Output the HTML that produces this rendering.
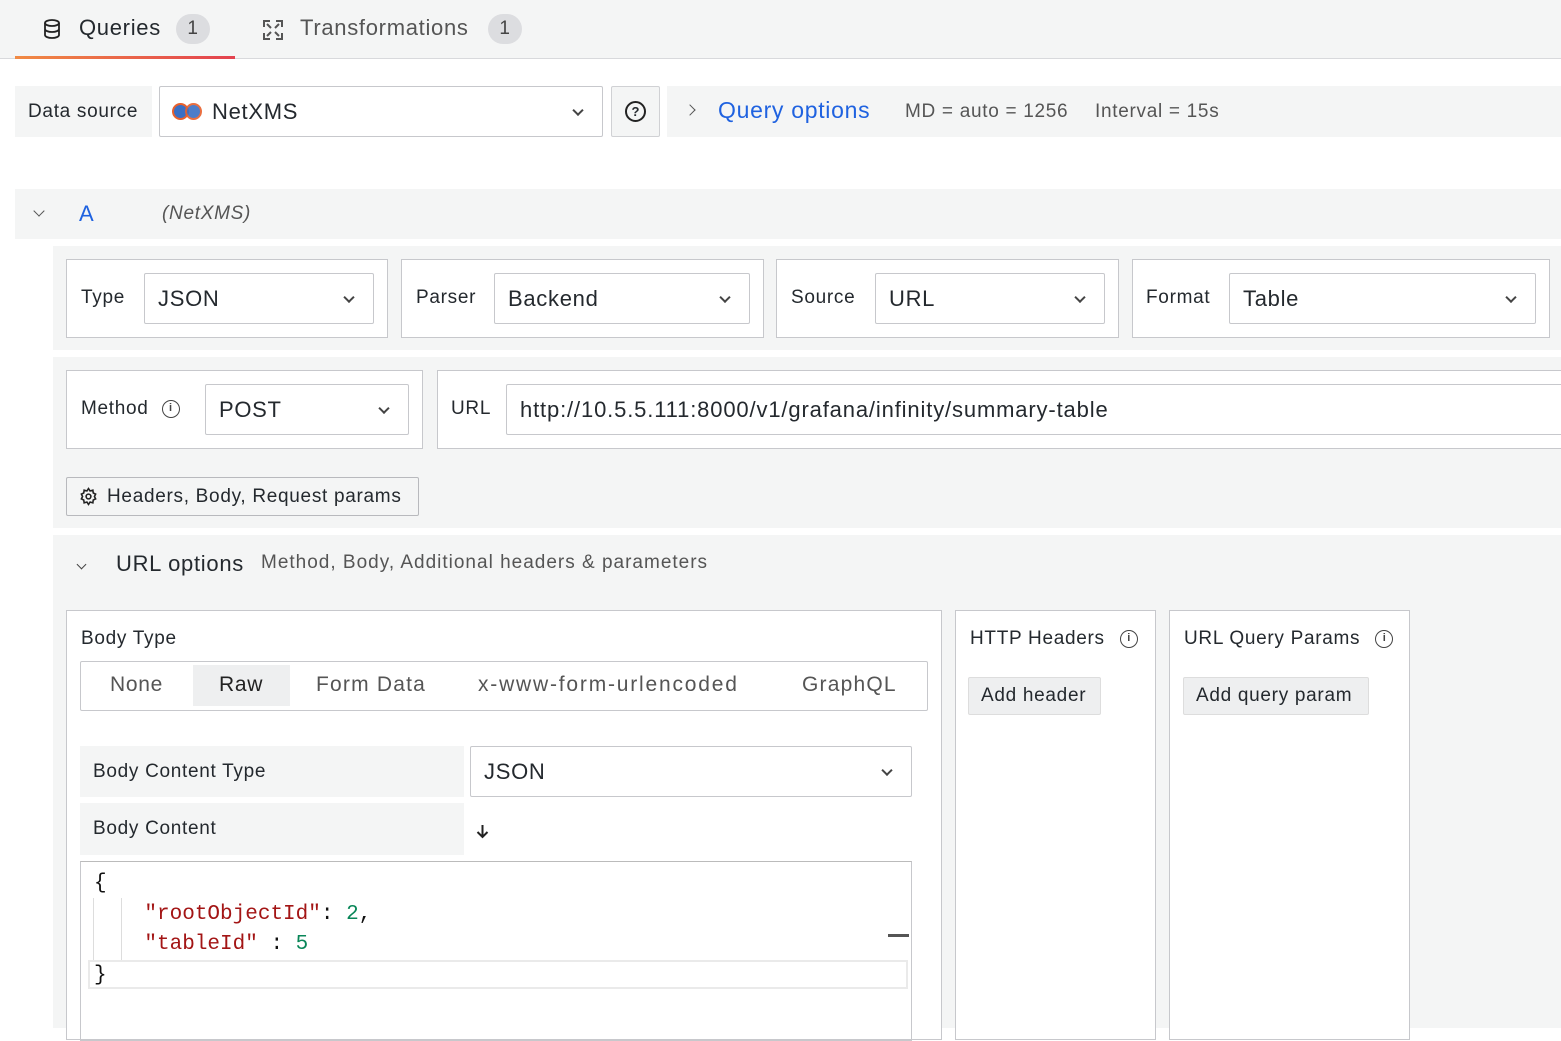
<!DOCTYPE html>
<html><head><meta charset="utf-8"><style>
*{box-sizing:border-box;margin:0;padding:0}
body{width:1561px;height:1028px;overflow:hidden;background:#fff;font-family:"Liberation Sans",sans-serif;color:#24292e;position:relative;letter-spacing:.7px}
.a{position:absolute;white-space:nowrap}
.g{background:#f4f5f5}
.bx{position:absolute;background:#fff;border:1px solid #c7c8cc}
.sel{position:absolute;background:#fff;border:1px solid #c7c8cc;border-radius:2px;font-size:22px;display:flex;align-items:center;padding-left:13px;color:#24292e;white-space:nowrap;overflow:hidden}
.chev{position:absolute;right:20px;top:50%;width:8px;height:8px;border-right:2px solid #444;border-bottom:2px solid #444;transform:translateY(-70%) rotate(45deg)}
.lbl{position:absolute;font-size:19px;color:#24292e;white-space:nowrap}
.info{display:inline-block;width:18px;height:18px;border:1.6px solid #444;border-radius:50%;font-size:11px;text-align:center;line-height:15px;font-weight:bold;color:#444;vertical-align:middle;letter-spacing:0}
</style></head><body>
<div class="a g" style="left:0;top:0;width:1561px;height:59px;border-bottom:1px solid #d8d9dc"></div>
<div class="a" style="left:15px;top:56px;width:220px;height:3px;background:linear-gradient(90deg,#f08a44,#e3424f)"></div>
<svg class="a" style="left:43px;top:19px" width="18" height="20" viewBox="0 0 18 20" fill="none" stroke="#222" stroke-width="1.8"><ellipse cx="9" cy="4" rx="7" ry="3"/><path d="M2 4v12c0 1.7 3.1 3 7 3s7-1.3 7-3V4M2 10c0 1.7 3.1 3 7 3s7-1.3 7-3"/></svg>
<div class="a" style="left:79px;top:15px;font-size:22px;color:#24292e">Queries</div>
<div class="a" style="left:176px;top:14px;width:34px;height:30px;border-radius:15px;background:#dcdde0;font-size:19px;text-align:center;line-height:30px;color:#444">1</div>
<svg class="a" style="left:262px;top:19px" width="22" height="22" viewBox="0 0 22 22" fill="none" stroke="#555" stroke-width="2"><path d="M2 8V2h6M14 2h6v6M20 14v6h-6M8 20H2v-6M5 5l4 4M17 5l-4 4M17 17l-4-4M5 17l4-4"/></svg>
<div class="a" style="left:300px;top:15px;font-size:22px;color:#555">Transformations</div>
<div class="a" style="left:488px;top:14px;width:34px;height:30px;border-radius:15px;background:#dcdde0;font-size:19px;text-align:center;line-height:30px;color:#444">1</div>
<div class="a g" style="left:15px;top:86px;width:137px;height:51px;font-size:19px;line-height:51px;padding-left:13px">Data source</div>
<div class="sel" style="left:159px;top:86px;width:444px;height:51px;padding-left:52px">NetXMS<span class="chev"></span></div>
<div class="a" style="left:172px;top:103px;width:17px;height:17px;border-radius:50%;background:#3a6fc4;border:2.5px solid #e8602c"></div>
<div class="a" style="left:185px;top:103px;width:17px;height:17px;border-radius:50%;background:#3a6fc4;border:2.5px solid #e8602c;opacity:.9"></div>
<div class="a g" style="left:611px;top:86px;width:49px;height:51px;border:1px solid #d0d1d4;border-radius:2px"></div>
<div class="a" style="left:625px;top:101px;width:21px;height:21px;border:2px solid #222;border-radius:50%;font-size:13px;font-weight:bold;text-align:center;line-height:17px;letter-spacing:0">?</div>
<div class="a g" style="left:667px;top:86px;width:894px;height:51px"></div>
<div class="a" style="left:686px;top:106px;width:8px;height:8px;border-right:1.8px solid #555;border-bottom:1.8px solid #555;transform:rotate(-45deg)"></div>
<div class="a" style="left:718px;top:97px;font-size:23px;color:#1f62e0">Query options</div>
<div class="a" style="left:905px;top:101px;font-size:19px;color:#555">MD = auto = 1256</div>
<div class="a" style="left:1095px;top:101px;font-size:19px;color:#555">Interval = 15s</div>
<div class="a g" style="left:15px;top:189px;width:1546px;height:50px"></div>
<div class="a" style="left:35px;top:207px;width:8px;height:8px;border-right:1.8px solid #555;border-bottom:1.8px solid #555;transform:rotate(45deg)"></div>
<div class="a" style="left:79px;top:201px;font-size:22px;color:#1f62e0">A</div>
<div class="a" style="left:162px;top:203px;font-size:19px;color:#555;font-style:italic">(NetXMS)</div>
<div class="a g" style="left:53px;top:246px;width:1508px;height:104px"></div>
<div class="bx" style="left:66px;top:259px;width:322px;height:79px"></div>
<div class="lbl" style="left:81px;top:287px">Type</div>
<div class="sel" style="left:144px;top:273px;width:230px;height:51px">JSON<span class="chev"></span></div>
<div class="bx" style="left:401px;top:259px;width:363px;height:79px"></div>
<div class="lbl" style="left:416px;top:287px">Parser</div>
<div class="sel" style="left:494px;top:273px;width:256px;height:51px">Backend<span class="chev"></span></div>
<div class="bx" style="left:776px;top:259px;width:343px;height:79px"></div>
<div class="lbl" style="left:791px;top:287px">Source</div>
<div class="sel" style="left:875px;top:273px;width:230px;height:51px">URL<span class="chev"></span></div>
<div class="bx" style="left:1132px;top:259px;width:418px;height:79px"></div>
<div class="lbl" style="left:1146px;top:287px">Format</div>
<div class="sel" style="left:1229px;top:273px;width:307px;height:51px">Table<span class="chev"></span></div>
<div class="a g" style="left:53px;top:357px;width:1508px;height:171px"></div>
<div class="bx" style="left:66px;top:370px;width:357px;height:79px"></div>
<div class="lbl" style="left:81px;top:398px">Method <span class="info" style="margin-left:7px">i</span></div>
<div class="sel" style="left:205px;top:384px;width:204px;height:51px">POST<span class="chev"></span></div>
<div class="bx" style="left:437px;top:370px;width:1130px;height:79px"></div>
<div class="lbl" style="left:451px;top:398px">URL</div>
<div class="sel" style="left:506px;top:384px;width:1060px;height:51px;letter-spacing:.85px">http://10.5.5.111:8000/v1/grafana/infinity/summary-table</div>
<div class="a" style="left:66px;top:477px;width:353px;height:39px;border:1px solid #b8b9bd;border-radius:2px;background:#f4f5f5;font-size:19px;line-height:37px;padding-left:40px">Headers, Body, Request params</div>
<svg class="a" style="left:79px;top:487px" width="19" height="19" viewBox="0 0 24 24" fill="none" stroke="#222" stroke-width="2"><circle cx="12" cy="12" r="3"/><path d="M12 2l2 3 3.5-1 .5 3.5 3 1.5-1.5 3 1.5 3-3 1.5-.5 3.5-3.5-1-2 3-2-3-3.5 1-.5-3.5-3-1.5 1.5-3L3 9l3-1.5.5-3.5 3.5 1z"/></svg>
<div class="a g" style="left:53px;top:535px;width:1508px;height:493px"></div>
<div class="a" style="left:78px;top:561px;width:7px;height:7px;border-right:1.8px solid #444;border-bottom:1.8px solid #444;transform:rotate(45deg)"></div>
<div class="a" style="left:116px;top:551px;font-size:22px">URL options</div>
<div class="a" style="left:261px;top:552px;font-size:19px;color:#555;letter-spacing:1px">Method, Body, Additional headers &amp; parameters</div>
<div class="bx" style="left:66px;top:610px;width:876px;height:430px"></div>
<div class="lbl" style="left:81px;top:628px">Body Type</div>
<div class="a" style="left:80px;top:661px;width:848px;height:50px;border:1px solid #c7c8cc;border-radius:2px"></div>
<div class="a" style="left:193px;top:665px;width:97px;height:41px;background:#eeeff0"></div>
<div class="a" style="left:110px;top:673px;font-size:21px;color:#555">None</div>
<div class="a" style="left:219px;top:673px;font-size:21px;color:#222">Raw</div>
<div class="a" style="left:316px;top:673px;font-size:21px;color:#555;letter-spacing:1.2px">Form Data</div>
<div class="a" style="left:478px;top:673px;font-size:21px;color:#555;letter-spacing:1.8px">x-www-form-urlencoded</div>
<div class="a" style="left:802px;top:673px;font-size:21px;color:#555;letter-spacing:1.2px">GraphQL</div>
<div class="a g" style="left:80px;top:746px;width:384px;height:51px;font-size:19px;line-height:51px;padding-left:13px">Body Content Type</div>
<div class="sel" style="left:470px;top:746px;width:442px;height:51px">JSON<span class="chev"></span></div>
<div class="a g" style="left:80px;top:803px;width:384px;height:52px;font-size:19px;line-height:52px;padding-left:13px">Body Content</div>
<svg class="a" style="left:476px;top:824px" width="13" height="15" viewBox="0 0 13 15" fill="none" stroke="#222" stroke-width="2"><path d="M6.5 1v12M1.5 8l5 5 5-5"/></svg>
<div class="a" style="left:80px;top:861px;width:832px;height:180px;border:1px solid #c7c8cc;border-top-color:#bbb"></div>
<div class="a" style="left:93px;top:898px;width:1px;height:62px;background:#ddd"></div>
<div class="a" style="left:121px;top:898px;width:1px;height:62px;background:#ddd"></div>
<div class="a" style="left:88px;top:960px;width:820px;height:29px;border:2px solid #eaeaea"></div>
<div class="a" style="left:888px;top:934px;width:21px;height:3px;background:#555"></div>
<pre class="a" style="left:94px;top:869px;font-family:'Liberation Mono',monospace;font-size:21px;line-height:30.5px;color:#111;letter-spacing:0;white-space:pre">{
    <span style="color:#a31515">"rootObjectId"</span>: <span style="color:#098658">2</span>,
    <span style="color:#a31515">"tableId"</span> : <span style="color:#098658">5</span>
}</pre>
<div class="bx" style="left:955px;top:610px;width:201px;height:430px"></div>
<div class="lbl" style="left:970px;top:628px">HTTP Headers <span class="info" style="margin-left:9px">i</span></div>
<div class="a" style="left:968px;top:677px;width:133px;height:38px;background:#eeeff0;border:1px solid #ddd;border-radius:2px;font-size:19px;line-height:36px;padding-left:12px">Add header</div>
<div class="bx" style="left:1169px;top:610px;width:241px;height:430px"></div>
<div class="lbl" style="left:1184px;top:628px">URL Query Params <span class="info" style="margin-left:9px">i</span></div>
<div class="a" style="left:1183px;top:677px;width:186px;height:38px;background:#eeeff0;border:1px solid #ddd;border-radius:2px;font-size:19px;line-height:36px;padding-left:12px">Add query param</div>
</body></html>
